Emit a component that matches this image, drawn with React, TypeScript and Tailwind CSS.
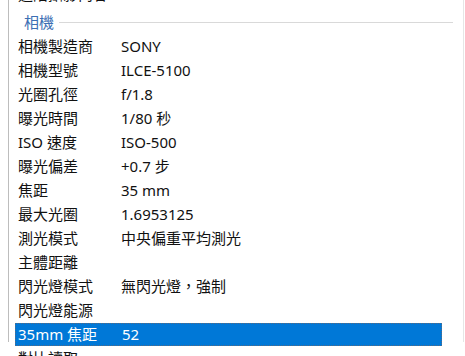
import React from "react"

const rows: [string, string][] = [
  ["相機製造商", "SONY"],
  ["相機型號", "ILCE-5100"],
  ["光圈孔徑", "f/1.8"],
  ["曝光時間", "1/80 秒"],
  ["ISO 速度", "ISO-500"],
  ["曝光偏差", "+0.7 步"],
  ["焦距", "35 mm"],
  ["最大光圈", "1.6953125"],
  ["測光模式", "中央偏重平均測光"],
  ["主體距離", ""],
  ["閃光燈模式", "無閃光燈，強制"],
  ["閃光燈能源", ""],
]

const font = { fontFamily: '"Noto Sans", "Noto Sans CJK TC", sans-serif' }

export default function App() {
  return (
    <div className="w-[465px] h-[356px] overflow-hidden bg-white text-[15px] text-[#111]" style={font}>
      <div className="ml-[8px] mr-[1px] h-full border-l border-r border-l-[#bdbdbd] border-r-[#e6e6e6]">
        <div className="-mt-[14px]">
          {/* clipped row above */}
          <div className="h-[24px] flex items-center pl-[9px]">
            <span className="-translate-y-[4px]">進階攝影內容</span>
          </div>

          {/* group header */}
          <div className="h-[24px] flex items-center pl-[15px] pr-[10px]">
            <span className="text-[#3c6fb4]">相機</span>
            <div className="flex-1 ml-[5px] h-px bg-[#d9d9d9]" />
          </div>

          {rows.map(([label, value], i) => (
            <div key={i} className="h-[24px] flex items-center pl-[9px]">
              <span className="w-[103px] shrink-0">{label}</span>
              <span>{value}</span>
            </div>
          ))}

          {/* selected row */}
          <div className="h-[24px] flex items-center pl-[6px] pr-[21px]">
            <div className="flex-1 h-[23px] flex items-center pl-[2px] bg-[#0078d7] text-white border border-dotted border-[#5a6a80]">
              <span className="w-[104px] shrink-0">35mm 焦距</span>
              <span>52</span>
            </div>
          </div>

          {/* clipped row below */}
          <div className="h-[24px] flex items-center pl-[9px]">
            <span>對比讀取</span>
          </div>
        </div>
      </div>
    </div>
  )
}
